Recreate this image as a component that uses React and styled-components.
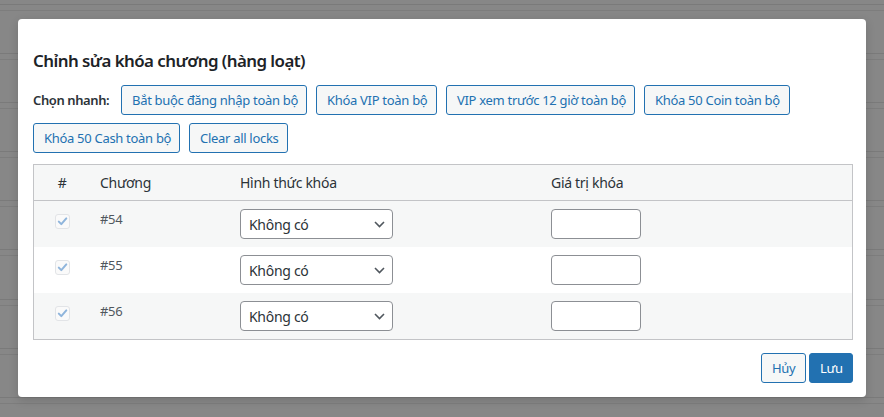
import React from 'react';
import styled, { createGlobalStyle } from 'styled-components';

const GlobalStyle = createGlobalStyle`
  html, body {
    margin: 0;
    padding: 0;
  }
  body {
    width: 884px;
    height: 417px;
    overflow: hidden;
    font-family: "Noto Sans", "Liberation Sans", sans-serif;
    font-size: 13px;
    letter-spacing: -0.3px;
    color: #2c3338;
    background-color: #878787;
    background-image: repeating-linear-gradient(
      to bottom,
      transparent 0px,
      transparent 4px,
      #7a7a7a 4px,
      #7a7a7a 5px,
      transparent 5px,
      transparent 10px,
      #7d7d7d 10px,
      #7d7d7d 11px,
      transparent 11px,
      transparent 49.1px
    );
  }
`;

const Overlay = styled.div`
  padding: 19px 0 0 18px;
`;

const Modal = styled.div`
  width: 820px;
  background: #fff;
  border-radius: 4px;
  padding: 30px 13px 14px 15px;
  box-shadow: 0 3px 10px rgba(0, 0, 0, 0.15);
`;

const Title = styled.h2`
  margin: 0 0 12px;
  font-size: 16.9px;
  line-height: 24px;
  font-weight: 600;
  letter-spacing: -0.55px;
  color: #1d2327;
`;

const QuickRow = styled.div`
  display: flex;
  flex-wrap: wrap;
  align-items: center;
  gap: 8px 9px;
`;

const QuickLabel = styled.span`
  width: 79px;
  font-weight: 600;
  letter-spacing: -0.4px;
  color: #2c3338;
`;

const Button = styled.button`
  box-sizing: border-box;
  width: ${(p) => (p.$w ? `${p.$w}px` : 'auto')};
  height: 30px;
  padding: 0 10px;
  font-family: inherit;
  font-size: 13px;
  letter-spacing: -0.3px;
  line-height: 28px;
  text-align: center;
  border-radius: 3px;
  border: 1px solid #2271b1;
  background: ${(p) => (p.$primary ? '#2271b1' : '#f6f7f7')};
  color: ${(p) => (p.$primary ? '#fff' : '#2271b1')};
  cursor: pointer;
  white-space: nowrap;
`;

const Table = styled.table`
  width: 100%;
  margin-top: 11px;
  border: 1px solid #c3c4c7;
  border-spacing: 0;
  table-layout: fixed;
`;

const HeadCell = styled.th`
  text-align: ${(p) => (p.$center ? 'center' : 'left')};
  font-weight: 400;
  font-size: 14px;
  line-height: 19px;
  color: #2c3338;
  padding: 8px 10px;
  background: #f6f7f7;
  border-bottom: 1px solid #c3c4c7;
`;

const Row = styled.tr`
  background: ${(p) => (p.$alt ? '#f6f7f7' : '#fff')};
`;

const Cell = styled.td`
  vertical-align: top;
  padding: 8px 10px;
  line-height: 20px;
  color: #50575e;
  text-align: ${(p) => (p.$center ? 'center' : 'left')};
`;

const Check = styled.span`
  display: inline-block;
  box-sizing: border-box;
  width: 15px;
  height: 15px;
  margin-top: 5px;
  border: 1px solid #e2e4e7;
  border-radius: 3px;
  background: #fafafa;
  position: relative;
  svg {
    position: absolute;
    left: 1px;
    top: 1px;
  }
`;

const SelectWrap = styled.div`
  position: relative;
  width: 153px;
`;

const Select = styled.select`
  appearance: none;
  box-sizing: border-box;
  width: 100%;
  height: 30px;
  padding: 0 24px 0 8px;
  font-family: inherit;
  font-size: 14px;
  letter-spacing: -0.3px;
  color: #2c3338;
  background: #fff;
  border: 1px solid #8c8f94;
  border-radius: 4px;
`;

const Chevron = styled.svg`
  position: absolute;
  right: 8px;
  top: 12px;
  pointer-events: none;
`;

const ValueInput = styled.input`
  box-sizing: border-box;
  width: 90px;
  height: 30px;
  border: 1px solid #8c8f94;
  border-radius: 4px;
  background: #fff;
  display: block;
`;

const Footer = styled.div`
  display: flex;
  justify-content: flex-end;
  gap: 3px;
  margin-top: 13px;
`;

const quick = [
  { label: 'Bắt buộc đăng nhập toàn bộ', w: 186 },
  { label: 'Khóa VIP toàn bộ', w: 121 },
  { label: 'VIP xem trước 12 giờ toàn bộ', w: 189 },
  { label: 'Khóa 50 Coin toàn bộ', w: 146 },
  { label: 'Khóa 50 Cash toàn bộ', w: 147 },
  { label: 'Clear all locks', w: 99 },
];

const chapters = ['#54', '#55', '#56'];

function CheckMark() {
  return (
    <Check>
      <svg width="11" height="11" viewBox="0 0 11 11">
        <path d="M1.8 5.6 L4.3 8.1 L9.3 2.4" fill="none" stroke="#8fb5dc" strokeWidth="2" strokeLinecap="round" strokeLinejoin="round" />
      </svg>
    </Check>
  );
}

export default function App() {
  return (
    <>
      <GlobalStyle />
      <Overlay>
        <Modal>
          <Title>Chỉnh sửa khóa chương (hàng loạt)</Title>
          <QuickRow>
            <QuickLabel>Chọn nhanh:</QuickLabel>
            {quick.map((q) => (
              <Button key={q.label} $w={q.w}>{q.label}</Button>
            ))}
          </QuickRow>
          <Table>
            <colgroup>
              <col style={{ width: 56 }} />
              <col style={{ width: 140 }} />
              <col style={{ width: 311 }} />
              <col />
            </colgroup>
            <thead>
              <tr>
                <HeadCell $center>#</HeadCell>
                <HeadCell>Chương</HeadCell>
                <HeadCell>Hình thức khóa</HeadCell>
                <HeadCell>Giá trị khóa</HeadCell>
              </tr>
            </thead>
            <tbody>
              {chapters.map((c, i) => (
                <Row key={c} $alt={i % 2 === 0}>
                  <Cell $center>
                    <CheckMark />
                  </Cell>
                  <Cell>{c}</Cell>
                  <Cell>
                    <SelectWrap>
                      <Select defaultValue="none">
                        <option value="none">Không có</option>
                      </Select>
                      <Chevron width="11" height="7" viewBox="0 0 11 7">
                        <path d="M1 1 L5.5 5.5 L10 1" fill="none" stroke="#50575e" strokeWidth="1.6" />
                      </Chevron>
                    </SelectWrap>
                  </Cell>
                  <Cell>
                    <ValueInput type="text" />
                  </Cell>
                </Row>
              ))}
            </tbody>
          </Table>
          <Footer>
            <Button $w={45}>Hủy</Button>
            <Button $primary $w={44}>Lưu</Button>
          </Footer>
        </Modal>
      </Overlay>
    </>
  );
}
